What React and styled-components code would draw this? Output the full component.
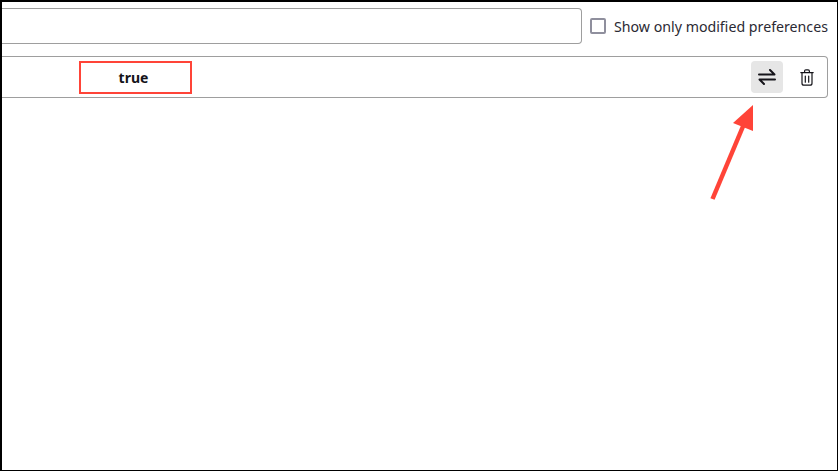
import React from 'react'
import styled, { createGlobalStyle } from 'styled-components'

const GlobalStyle = createGlobalStyle`
  html, body {
    margin: 0;
    padding: 0;
    background: #fff;
  }
`

const Frame = styled.div`
  position: relative;
  box-sizing: border-box;
  width: 838px;
  height: 471px;
  overflow: hidden;
  background: #fff;
  border-style: solid;
  border-color: #000;
  border-width: 2px 1px 1px 2px;
  padding: 6px 0 0 0;
  font-family: "Noto Sans", "Open Sans", sans-serif;
  color: #15141a;
`

const SearchRow = styled.div`
  display: flex;
  align-items: center;
  height: 36px;
`

const SearchBox = styled.div`
  box-sizing: border-box;
  width: 580px;
  height: 36px;
  border: 1px solid #9e9e9e;
  border-left: none;
  border-radius: 0 4px 4px 0;
`

const CheckLabel = styled.label`
  display: flex;
  align-items: center;
  margin-left: 8px;
  font-size: 14.2px;
  line-height: 20px;
  white-space: nowrap;
  color: #2b2a33;
`

const CheckText = styled.span`
  padding-top: 2px;
`

const CheckBox = styled.span`
  box-sizing: border-box;
  width: 16px;
  height: 16px;
  margin-right: 8px;
  border: 2px solid #8f8f9d;
  border-radius: 2px;
`

const PrefRow = styled.div`
  box-sizing: border-box;
  display: flex;
  align-items: center;
  width: 826px;
  height: 42px;
  margin-top: 12px;
  border: 1px solid #9e9e9e;
  border-left: none;
  border-radius: 0 4px 4px 0;
`

const ValueCell = styled.div`
  box-sizing: border-box;
  display: flex;
  align-items: center;
  justify-content: center;
  width: 113px;
  height: 33px;
  margin-left: 77px;
  padding-right: 4px;
  border: 2px solid #ff4438;
  font-size: 14px;
  font-weight: 700;
  color: #15141a;
`

const Actions = styled.div`
  display: flex;
  align-items: center;
  gap: 8px;
  margin-left: auto;
  margin-right: 4px;
`

const IconButton = styled.button`
  display: flex;
  align-items: center;
  justify-content: center;
  width: 32px;
  height: 32px;
  padding: 0;
  border: none;
  border-radius: 4px;
  background: ${(p) => (p.$active ? '#e6e6e6' : 'transparent')};
  color: #15141a;
`

const ArrowOverlay = styled.svg`
  position: absolute;
  left: 696px;
  top: 96px;
`

const ToggleIcon = () => (
  <svg width="18" height="16" viewBox="0 0 18 16" fill="none" stroke="currentColor" strokeWidth="2" strokeLinecap="round" strokeLinejoin="round">
    <path d="M1 5.500h15.500L12 1" />
    <path d="M17 10.500H1.500L6 15" />
  </svg>
)

const TrashIcon = () => (
  <svg width="14" height="17" viewBox="0 0 14 17" fill="none" stroke="currentColor" strokeWidth="1.200" strokeLinecap="round" strokeLinejoin="round">
    <path d="M.8 3.600h12.400" />
    <path d="M4.600 3.400V2.200c0-.8.5-1.400 1.300-1.400h2.200c.8 0 1.300.6 1.300 1.400v1.200" />
    <path d="M2 3.800v10.400c0 1.200.8 2 2 2h6c1.200 0 2-.8 2-2V3.800" />
    <path d="M5.300 7v6.200M8.700 7v6.200" />
  </svg>
)

const App = () => {
  return (
    <>
      <GlobalStyle />
      <Frame>
        <SearchRow>
          <SearchBox />
          <CheckLabel>
            <CheckBox />
            <CheckText>Show only modified preferences</CheckText>
          </CheckLabel>
        </SearchRow>
        <PrefRow>
          <ValueCell>true</ValueCell>
          <Actions>
            <IconButton $active aria-label="Toggle">
              <ToggleIcon />
            </IconButton>
            <IconButton aria-label="Delete">
              <TrashIcon />
            </IconButton>
          </Actions>
        </PrefRow>
        <ArrowOverlay width="70" height="110" viewBox="0 0 70 110">
          <path d="M14.500 101L46 26" stroke="#ff4438" strokeWidth="4.500" fill="none" />
          <polygon points="55,7 35,25 55,33" fill="#ff4438" />
        </ArrowOverlay>
      </Frame>
    </>
  )
}

export default App
